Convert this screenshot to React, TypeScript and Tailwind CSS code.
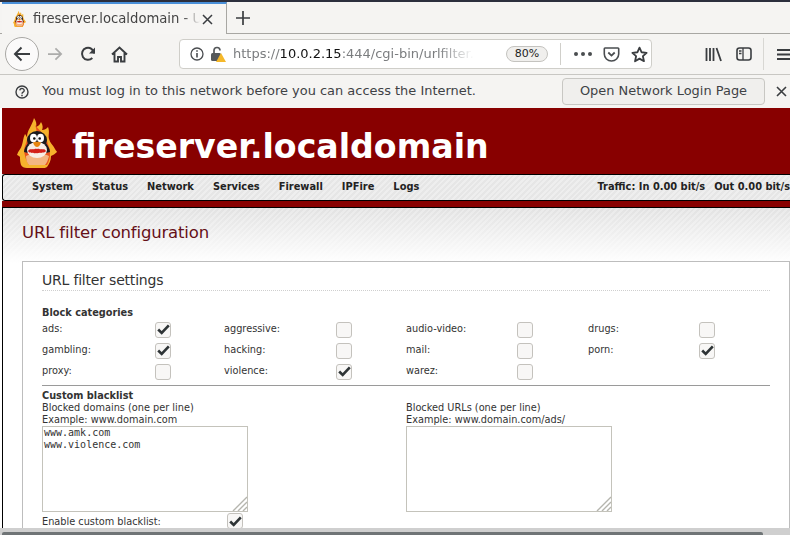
const hatch =
  "bg-[repeating-linear-gradient(135deg,#e6e6e6_0px,#e6e6e6_2px,#eeeeee_2px,#eeeeee_4px)]"

function Logo({ width }: { width: number }) {
  return (
    <svg width={width} height={width * 1.25} viewBox="0 0 40 50">
      {/* outer flame */}
      <path
        d="M17 0c2 3 3 6 2 9 3-1 4-3 5-5 2 3 2 6 1 8 3 0 5-2 6-3 2 5 0 8 1 12 1 4 4 6 6 10 1 2 2 2 2 3-2 2-4 3-6 4 0 5-2 8-4 11-1 1-3 1-6 1H10c-3 0-5-1-6-3-1-3-1-6-1-8-1-1-2-2-3-2 1-4 4-6 5-10 1-3 1-7 3-11 1 1 1 2 2 3 0-7 5-11 7-19z"
        fill="#f6b22c"
      />
      {/* inner flame */}
      <path
        d="M18 7c1 3 2 5 1 7-4 0-8 3-9 8-1 4-3 7-3 11 1 5 2 10 5 14h18c2-3 3-7 3-12 0-5-2-8-3-12-1-4-3-6-5-8-2-3-5-5-7-8z"
        fill="#e9531c"
      />
      <path d="M9 38c5-3 18-3 23 0-1 4-2 7-4 9H12c-2-2-3-5-3-9z" fill="#f3b583" />
      {/* penguin */}
      <ellipse cx="20" cy="22" rx="10" ry="9" fill="#1a1a1e" />
      <path d="M11 25c-2 3-4 6-4 9l4 1 3-8zM29 25c2 3 4 6 4 9l-4 1-3-8z" fill="#1a1a1e" />
      <ellipse cx="20" cy="32" rx="10" ry="8" fill="#f8eee6" />
      <ellipse cx="16.500" cy="20" rx="3.500" ry="4.300" fill="#fff" />
      <ellipse cx="23.500" cy="20" rx="3.500" ry="4.300" fill="#fff" />
      <circle cx="17.300" cy="20.500" r="1.300" fill="#111" />
      <circle cx="22.700" cy="20.500" r="1.300" fill="#111" />
      <path d="M16 24.500c2-1 6-1 8 0-1 3-2.500 4.500-4 4.500s-3-1.500-4-4.500z" fill="#e8860f" />
      <path d="M11 33c2-3 4-1 5-2 1 1 2-1 4 0 2-1 3 1 4 0 2 1 3-1 5 2-1 2-3 1-5 2-2-1-3 1-5 0-2 1-3-1-4 0-2-1-3 0-4-2z" fill="#d3201a" />
    </svg>
  )
}

function Box({ on }: { on?: boolean }) {
  return (
    <span className="flex h-4 w-4 items-center justify-center rounded-[3px] border border-[#c4c2bd] bg-[#f8f7f6]">
      {on && (
        <svg width="13" height="11" viewBox="0 0 13 11">
          <path d="M1.200 5.500l3.500 3.500L11.800 1.400" fill="none" stroke="#2e3436" strokeWidth="2.600" />
        </svg>
      )}
    </span>
  )
}

const categories: [string, boolean][] = [
  ["ads:", true],
  ["aggressive:", false],
  ["audio-video:", false],
  ["drugs:", false],
  ["gambling:", true],
  ["hacking:", false],
  ["mail:", false],
  ["porn:", true],
  ["proxy:", false],
  ["violence:", true],
  ["warez:", false],
]

const labelWidths = ["w-[113px]", "w-[112px]", "w-[111px]", "w-[111px]"]

const menu = ["System", "Status", "Network", "Services", "Firewall", "IPFire", "Logs"]

function Resize() {
  return (
    <svg width="15" height="15" viewBox="0 0 15 15" className="absolute bottom-0 right-0">
      <path d="M1 15L15 1M6 15L15 6M11 15l4-4" stroke="#b5b5ae" strokeWidth="1.400" />
    </svg>
  )
}

function Blacklist({ title, example, value }: { title: string; example: string; value?: string }) {
  return (
    <div className="w-[364px]">
      <p className="h-3 leading-3">{title}</p>
      <p className="h-3 leading-3">{example}</p>
      <div className="relative h-[86px] w-[206px] border border-[#c4c3bb] bg-white pl-px font-['DejaVu_Sans_Mono',monospace] text-[10px] leading-3 whitespace-pre-line text-[#333]">
        {value}
        <Resize />
      </div>
    </div>
  )
}

export default function App() {
  return (
    <div className="relative h-[535px] w-[790px] overflow-hidden bg-[#f5f4f2] font-['DejaVu_Sans',sans-serif] text-[#2e3436]">
      <div className="h-[2px] bg-[#2c2f3d]" />

      {/* tabs */}
      <div className="flex h-[32px] border-b border-[#a8a7a3]">
        <div className="-mb-px ml-[2px] flex h-[32px] w-[225px] items-center border-r border-[#a8a7a3] border-t-2 border-t-[#4a90d9] bg-[#f6f5f3] pl-[11px]">
          <Logo width={13} />
          <span className="ml-[7px] w-[167px] overflow-hidden py-px text-[13.200px] whitespace-nowrap text-[#444] [mask-image:linear-gradient(to_right,#000_150px,transparent)]">
            fireserver.localdomain - URL
          </span>
          <svg width="11" height="11" viewBox="0 0 11 11" className="ml-[2px]">
            <path d="M1 1l9 9M10 1l-9 9" stroke="#3a3d40" strokeWidth="1.500" />
          </svg>
        </div>
        <svg width="14" height="14" viewBox="0 0 14 14" className="ml-[9px] mt-[9px]">
          <path d="M7 0v14M0 7h14" stroke="#3a3d40" strokeWidth="1.700" />
        </svg>
      </div>

      {/* toolbar */}
      <div className="flex h-[41px] items-center border-b border-[#c8c7c3] pl-[5px]">
        <div className="flex h-[34px] w-[34px] items-center justify-center rounded-full border border-[#a9a8a5] bg-[#fbfafa]">
          <svg width="18" height="16" viewBox="0 0 18 16">
            <path d="M17 8H2M8.500 1.500L2 8l6.500 6.500" fill="none" stroke="#3a3d40" strokeWidth="2" />
          </svg>
        </div>
        <svg width="16" height="14" viewBox="0 0 18 16" className="ml-[8px]">
          <path d="M1 8h15M9.500 1.500L16 8l-6.500 6.500" fill="none" stroke="#acacab" strokeWidth="2" />
        </svg>
        <svg width="16" height="16" viewBox="0 0 16 16" className="ml-[17px]">
          <path d="M14 7.500A6 6 0 1 0 12.300 12" fill="none" stroke="#3a3d40" strokeWidth="2" />
          <path d="M15 1.500V7.500H9z" fill="#3a3d40" />
        </svg>
        <svg width="17" height="17" viewBox="0 0 17 17" className="ml-[15px]">
          <path d="M1 8.500L8.500 1.500 16 8.500M3.500 7v8.500h3.500V11h3v4.500h3.500V7" fill="none" stroke="#3a3d40" strokeWidth="1.900" />
        </svg>
        <div className="ml-[51px] flex h-[30px] w-[473px] items-center rounded-[4px] border border-[#cfcec9] bg-white pl-[10px]">
          <svg width="14" height="14" viewBox="0 0 14 14">
            <circle cx="7" cy="7" r="6" fill="none" stroke="#4a4d50" strokeWidth="1.300" />
            <path d="M7 6v4.500M7 3.200v1.600" stroke="#4a4d50" strokeWidth="1.600" />
          </svg>
          <svg width="16" height="16" viewBox="0 0 16 16" className="ml-[6px]">
            <path d="M4 7V4.500a3 3 0 0 1 6 0" fill="none" stroke="#55585a" strokeWidth="1.700" />
            <rect x="1" y="7" width="10" height="8" rx="1.500" fill="#55585a" />
            <path d="M11 7l5 9H6z" fill="#f5b82a" />
          </svg>
          <span className="ml-[7px] w-[241px] overflow-hidden py-px text-[13px] whitespace-nowrap text-[#7b7d7f] [mask-image:linear-gradient(to_right,#000_205px,transparent)]">
            https://<span className="text-[#111]">10.0.2.15</span>:444/cgi-bin/urlfilter.c
          </span>
          <span className="ml-[32px] flex h-[16px] w-[42px] items-center justify-center rounded-full border border-[#c4c3bf] bg-[#f0efed] text-[11px] text-[#222]">
            80%
          </span>
          <span className="ml-[12px] h-[22px] w-px bg-[#d0cfca]" />
          <span className="ml-[13px] flex gap-[3px]">
            <i className="h-[4px] w-[4px] rounded-full bg-[#4a4d50]" />
            <i className="h-[4px] w-[4px] rounded-full bg-[#4a4d50]" />
            <i className="h-[4px] w-[4px] rounded-full bg-[#4a4d50]" />
          </span>
          <svg width="17" height="15" viewBox="0 0 16 15" className="ml-[11px]">
            <path d="M1.500 1h13a.7.7 0 0 1 .7.7V7a7.200 7 0 0 1-14.400 0V1.700a.7.7 0 0 1 .7-.7z" fill="none" stroke="#4a4d50" strokeWidth="1.600" />
            <path d="M4.800 5.500L8 8.600l3.200-3.100" fill="none" stroke="#4a4d50" strokeWidth="1.800" />
          </svg>
          <svg width="17" height="17" viewBox="0 0 16 16" className="ml-[11px]">
            <path d="M8 1.500l2 4.400 4.700.5-3.500 3.200 1 4.700L8 11.900l-4.200 2.400 1-4.700L1.300 6.400 6 5.900z" fill="none" stroke="#3a3d40" strokeWidth="1.700" strokeLinejoin="round" />
          </svg>
        </div>
        <svg width="17" height="15" viewBox="0 0 17 15" className="ml-[53px]">
          <path d="M1.500 1v13M5 1v13M8.500 1v13M11.500 1l4.500 13" stroke="#3a3d40" strokeWidth="1.800" fill="none" />
        </svg>
        <svg width="16" height="14" viewBox="0 0 16 14" className="ml-[14px]">
          <rect x="1" y="1" width="14" height="12" rx="2.500" fill="none" stroke="#3a3d40" strokeWidth="1.600" />
          <path d="M7 1v12M3 4h2.500M3 6.500h2.500" stroke="#3a3d40" strokeWidth="1.300" />
        </svg>
        <span className="ml-[11px] h-[32px] w-px bg-[#d8d7d3]" />
        <svg width="13" height="13" viewBox="0 0 13 13" className="ml-[13px]">
          <path d="M0 2h13M0 6.500h13M0 11h13" stroke="#3a3d40" strokeWidth="1.800" />
        </svg>
      </div>

      {/* captive portal bar */}
      <div className="flex h-[33px] items-center pl-[15px]">
        <svg width="14" height="14" viewBox="0 0 14 14">
          <circle cx="7" cy="7" r="6" fill="none" stroke="#3a3d40" strokeWidth="1.400" />
          <path d="M4.800 5.400a2.200 2 0 1 1 3.300 1.800c-.8.5-1.100.9-1.100 1.600" fill="none" stroke="#3a3d40" strokeWidth="1.400" />
          <path d="M7 9.700v1.500" stroke="#3a3d40" strokeWidth="1.500" />
        </svg>
        <span className="ml-[13px] w-[520px] pb-[2px] text-[12.940px] whitespace-nowrap text-[#3f4245]">
          You must log in to this network before you can access the Internet.
        </span>
        <span className="flex h-[27px] w-[203px] items-center justify-center rounded-[4px] border border-[#c8c7c3] bg-[#f0efed] pb-[2px] text-[12.940px] text-[#3f4245]">
          Open Network Login Page
        </span>
        <svg width="11" height="11" viewBox="0 0 11 11" className="ml-[11px]">
          <path d="M1 1l9 9M10 1l-9 9" stroke="#3a3d40" strokeWidth="1.600" />
        </svg>
      </div>

      {/* page */}
      <div className="h-[427px] bg-white pl-[2px]">
        <header className="flex h-[66px] items-center bg-[#880000] pl-[15px] pt-[4px]">
          <Logo width={40} />
          <h1 className="ml-[15px] mt-[8px] text-[33.200px] leading-none font-bold text-white">fireserver.localdomain</h1>
        </header>
        <nav className={`flex h-[27px] items-center justify-between rounded-l-[3px] border-y border-l border-black pb-[1px] pl-[29px] text-[9.850px] font-bold whitespace-nowrap text-[#222] ${hatch}`}>
          <div className="flex gap-[19px]">
            {menu.map((item) => (
              <span key={item}>{item}</span>
            ))}
          </div>
          <span className="flex gap-[9px]">
            <span>Traffic: In 0.00 bit/s</span>
            <span>Out 0.00 bit/s</span>
          </span>
        </nav>
        <div className="h-[7px] border-b border-black bg-[#880000]" />
        <div className="border-l border-black bg-[linear-gradient(to_bottom,transparent,#ffffff_55px),repeating-linear-gradient(135deg,#e2e2e2_0px,#e2e2e2_2px,#eaeaea_2px,#eaeaea_4px)] pl-[19px] pt-[12px]">
          <h2 className="h-[41px] text-[16.500px] leading-[25px] tracking-[-0.17px] text-[#651018]">URL filter configuration</h2>
          <section className="h-[280px] border border-[#bdbdbd] bg-white pl-[19px] pr-[19px] pt-[8px] text-[9.750px] text-[#333]">
            <h3 className="h-[21px] border-b border-dotted border-[#cfcfcf] text-[14px] leading-[21px] tracking-[-0.2px]">URL filter settings</h3>
            <p className="mt-[16px] h-3 text-[9.750px] leading-3 font-bold">Block categories</p>
            <div className="grid grid-cols-[182px_182px_182px_182px] auto-rows-[21px] items-center">
              {categories.map(([name, on], i) => (
                <div key={name} className="flex items-center">
                  <span className={labelWidths[i % 4]}>{name}</span>
                  <Box on={on} />
                </div>
              ))}
            </div>
            <div className="mt-[3px] border-t border-[#9a9a9a] pt-[4px]">
              <p className="h-3 text-[9.750px] leading-3 font-bold">Custom blacklist</p>
              <div className="flex">
                <Blacklist
                  title="Blocked domains (one per line)"
                  example="Example: www.domain.com"
                  value={"www.amk.com\nwww.violence.com"}
                />
                <Blacklist title="Blocked URLs (one per line)" example="Example: www.domain.com/ads/" />
              </div>
              <div className="mt-[1px] flex items-center">
                <span className="w-[185px] pt-[2px]">Enable custom blacklist:</span>
                <Box on />
              </div>
            </div>
          </section>
        </div>
      </div>

      {/* scrollbar */}
      <div className="absolute inset-x-0 bottom-0 h-[7px] border-t-4 border-[#cfcfcf] bg-[#cfcfcf] pl-[2px]">
        <div className="h-full w-[761px] rounded-t-[2px] bg-[#6f7476]" />
      </div>
    </div>
  )
}
